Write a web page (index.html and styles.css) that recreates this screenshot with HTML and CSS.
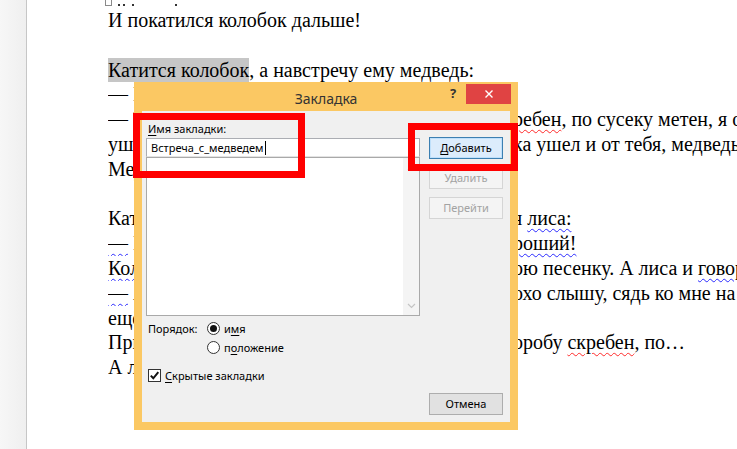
FILE: index.html
```html
<!DOCTYPE html>
<html lang="ru">
<head>
<meta charset="utf-8">
<title>Закладка</title>
<link rel="stylesheet" href="styles.css">
</head>
<body>
<div class="app">
  <div class="gutter"></div>
  <div class="page">
    <div class="marks"><span class="anchor"></span><span class="dot d1"></span><span class="dot d2"></span><span class="dot d3"></span><span class="dot d4"></span></div>
    <div class="ln">И покатился колобок дальше!</div>
    <div class="ln">&nbsp;</div>
    <div class="ln"><span class="hl">Катится колобок</span>, а навстречу ему медведь:</div>
    <div class="ln"><span class="a">— Колобок, колобок, я тебя съем!</span></div>
    <div class="ln"><span class="a">— Не ешь меня, косолапый! Я по коробу скребен, по сусеку метен</span><span class="b"><span class="wr">ребен</span>, по сусеку метен, я от дедушки ушел</span></div>
    <div class="ln"><span class="a">ушел, я от бабушки ушел, я от зайца ушел, я от волка</span><span class="b">ка ушел и от тебя, медведь, не хитро уйти!</span></div>
    <div class="ln"><span class="a">Медведь и не видал колобка.</span></div>
    <div class="ln">&nbsp;</div>
    <div class="ln"><span class="a">Катится колобок, а навстречу ему</span><span class="b">я <span class="wb">лиса:</span></span></div>
    <div class="ln"><span class="a"><span class="wb">—</span> Колобок, колобок, какой ты хороший!</span><span class="b"><span class="wb">роший!</span></span></div>
    <div class="ln"><span class="a"><span class="wb">Колобок</span> запел свою песенку.</span><span class="b">ою песенку. А лиса и <span class="wb">говорит:</span></span></div>
    <div class="ln"><span class="a"><span class="wb">—</span> Ах, песенка хороша, да я стала плохо слышу</span><span class="b">охо слышу, сядь ко мне на носок да пропой</span></div>
    <div class="ln"><span class="a">ещё разок погромче.</span></div>
    <div class="ln"><span class="a">Прыгнул колобок лисе на нос и запел: Я по коробу</span><span class="b">оробу <span class="wr">скребен</span>, по…</span></div>
    <div class="ln"><span class="a">А лиса его — ам! — и съела.</span></div>
  </div>
</div>

<div class="dialog">
  <div class="titlebar">
    <span></span>
    <div class="title">Закладка</div>
    <div class="ctrls">
      <span class="help">?</span>
      <span class="close"><svg width="10" height="10" viewBox="0 0 10 10"><path d="M1.5 1.5 L8.5 8.5 M8.5 1.5 L1.5 8.5" stroke="#fff" stroke-width="1.4" fill="none"/></svg></span>
    </div>
  </div>
  <div class="client">
    <div class="top">
      <div class="leftcol">
        <div class="lbl"><u>И</u>мя закладки:</div>
        <div class="field">Встреча_с_медведем<span class="caret"></span></div>
        <div class="list">
          <div class="scroll">
            <svg width="9" height="6" viewBox="0 0 9 6"><path d="M1 5 L4.5 1.5 L8 5" stroke="#c4c4c4" stroke-width="1.2" fill="none"/></svg>
            <svg width="9" height="6" viewBox="0 0 9 6"><path d="M1 1 L4.5 4.5 L8 1" stroke="#c4c4c4" stroke-width="1.2" fill="none"/></svg>
          </div>
        </div>
      </div>
      <div class="btns">
        <div class="btn default"><u>Д</u>обавить</div>
        <div class="btn disabled">Удалить</div>
        <div class="btn disabled">Перейти</div>
      </div>
    </div>
    <div class="order">
      <span class="olbl">Порядок:</span>
      <span class="opt"><span class="radio on"></span>и<u>м</u>я</span>
      <span></span>
      <span class="opt"><span class="radio"></span>п<u>о</u>ложение</span>
    </div>
    <div class="chk"><span class="box"><svg width="11" height="11" viewBox="0 0 11 11"><path d="M1.8 5.6 L4.3 8.3 L9.3 2.2" stroke="#111" stroke-width="2" fill="none"/></svg></span><u>С</u>крытые закладки</div>
    <div class="foot"><div class="btn">Отмена</div></div>
  </div>
</div>

<div class="redbox box1"></div>
<div class="redbox box2"></div>
</body>
</html>
```

FILE: styles.css
```css
html, body {
  margin: 0;
  padding: 0;
}
body {
  width: 737px;
  height: 449px;
  overflow: hidden;
  position: relative;
  background: #fff;
}
.app {
  display: flex;
  height: 449px;
}
.gutter {
  width: 26px;
  flex: none;
  background: linear-gradient(to right, #f7f7f7, #efefef);
  border-right: 1px solid #c6c6c6;
}
.page {
  flex: 1;
  overflow: hidden;
  background: #fff;
  padding-left: 81px;
  font-family: "Liberation Serif", "Times New Roman", serif;
  font-size: 20px;
  color: #000;
}
.marks {
  height: 8px;
  display: flex;
  align-items: flex-start;
  margin-left: -3px;
  position: relative;
}
.anchor {
  width: 5px;
  height: 5px;
  border: 1px solid #8a8a8a;
  border-top: none;
  background: #fff;
}
.dot {
  width: 2px;
  height: 2px;
  background: #333;
  margin-top: 4px;
}
.d1 { margin-left: 6px; }
.d2 { margin-left: 3px; }
.d3 { margin-left: 7px; }
.d4 { margin-left: 41px; }
.ln {
  height: 24.8px;
  line-height: 24.8px;
  white-space: nowrap;
  display: flex;
}
.a {
  width: 405px;
  flex: none;
  overflow: hidden;
}
.b {
  flex: none;
}
.hl {
  background: #c6c6c6;
}
.wb, .wr {
  text-decoration-line: underline;
  text-decoration-style: wavy;
  text-decoration-thickness: 1px;
  text-underline-offset: 3px;
}
.wb { text-decoration-color: #2a2aff; }
.wr { text-decoration-color: #ff2a2a; }

/* dialog window */
.dialog {
  position: absolute;
  left: 134px;
  top: 82px;
  width: 384px;
  height: 348px;
  box-sizing: border-box;
  padding: 0 8px 8px;
  background: #fbc863;
  display: flex;
  flex-direction: column;
  font-family: "Noto Sans", "Liberation Sans", sans-serif;
  font-size: 11px;
  color: #000;
}
.titlebar {
  height: 29px;
  flex: none;
  display: grid;
  grid-template-columns: 1fr auto 1fr;
  align-items: start;
}
.title {
  font-size: 14px;
  color: #333;
  line-height: 20px;
  padding-top: 7px;
}
.ctrls {
  justify-self: end;
  display: flex;
  align-items: flex-start;
  padding-top: 2px;
  margin-right: -1px;
}
.help {
  width: 26px;
  height: 20px;
  line-height: 19px;
  text-align: center;
  font-weight: bold;
  font-size: 13px;
  color: #333;
}
.close {
  width: 45px;
  height: 20px;
  background: #e04343;
  display: flex;
  align-items: center;
  justify-content: center;
}
.client {
  flex: 1;
  background: #f0f0f0;
  box-sizing: border-box;
  padding: 8px 7px 0 4px;
  display: flex;
  flex-direction: column;
}
.top {
  display: flex;
  gap: 9px;
}
.leftcol {
  width: 274px;
  flex: none;
}
.lbl {
  height: 19px;
  line-height: 19px;
  margin-left: 2px;
}
.field {
  height: 19px;
  box-sizing: border-box;
  background: #fff;
  border: 1px solid #abadb3;
  border-bottom-color: #e3e3e3;
  padding-left: 4px;
  line-height: 16px;
  display: flex;
  align-items: center;
}
.caret {
  width: 1px;
  height: 14px;
  background: #000;
  margin-left: 1px;
}
.list {
  height: 159px;
  box-sizing: border-box;
  background: #fff;
  border: 1px solid #a9a9a9;
  display: flex;
  justify-content: flex-end;
}
.scroll {
  width: 16px;
  background: #f4f4f4;
  display: flex;
  flex-direction: column;
  justify-content: space-between;
  align-items: center;
  padding: 7px 0 6px;
}
.btns {
  width: 74px;
  flex: none;
  display: flex;
  flex-direction: column;
  gap: 8px;
  padding-top: 18px;
}
.btn {
  width: 74px;
  height: 22px;
  box-sizing: border-box;
  border: 1px solid #adadad;
  background: #e1e1e1;
  text-align: center;
  line-height: 20px;
  color: #000;
}
.btn.default {
  border-color: #3c7fb1;
  background: #dcecfc;
  box-shadow: inset 0 0 0 1px #bfe0fb;
}
.btn.disabled {
  border-color: #d5d5d5;
  background: #f4f4f4;
  color: #a3a3a3;
}
.order {
  display: grid;
  grid-template-columns: 59px auto;
  grid-auto-rows: 16px;
  row-gap: 3px;
  margin: 4px 0 0 2px;
  align-items: center;
}
.olbl {
  color: #000;
}
.opt {
  display: flex;
  align-items: center;
}
.radio {
  width: 13px;
  height: 13px;
  box-sizing: border-box;
  border: 1px solid #333;
  border-radius: 50%;
  background: #fff;
  margin-right: 4px;
  display: flex;
  align-items: center;
  justify-content: center;
}
.radio.on::after {
  content: "";
  width: 7px;
  height: 7px;
  border-radius: 50%;
  background: #111;
}
.chk {
  height: 16px;
  display: flex;
  align-items: center;
  margin: 12px 0 0 2px;
}
.box {
  width: 13px;
  height: 13px;
  box-sizing: border-box;
  border: 1px solid #333;
  background: #fff;
  margin-right: 4px;
  display: flex;
  align-items: center;
  justify-content: center;
}
.foot {
  display: flex;
  justify-content: flex-end;
  margin-top: 10px;
}
u {
  text-decoration-thickness: 1px;
  text-underline-offset: 2px;
}

/* red annotation boxes */
.redbox {
  position: absolute;
  border: 7px solid #ff0000;
  box-sizing: border-box;
}
.box1 {
  left: 133px;
  top: 113px;
  width: 172px;
  height: 65px;
}
.box2 {
  left: 408px;
  top: 123px;
  width: 110px;
  height: 48px;
}
```
